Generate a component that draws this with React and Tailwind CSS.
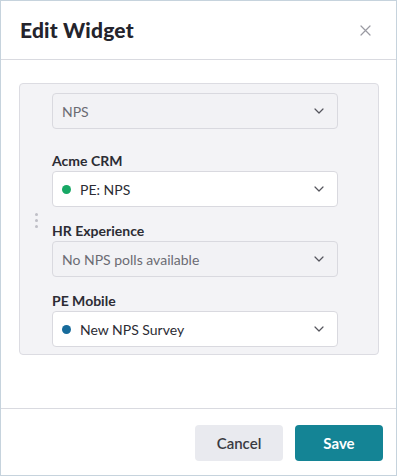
import React from 'react';

const Chevron = () => (
  <svg width="10" height="6" viewBox="0 0 10 6" fill="none" className="shrink-0">
    <path d="M1 1l4 4 4-4" stroke="#55555d" strokeWidth="1.2" strokeLinecap="round" strokeLinejoin="round" />
  </svg>
);

const SelectBox = ({ value, dot, disabled }) => (
  <div
    className={`flex h-9 w-full items-center justify-between rounded border border-[#d9d9df] pl-[9px] pr-[13px] text-[14px] ${
      disabled ? 'bg-[#f2f2f5] text-[#6b6b73]' : 'bg-white text-[#2c2c34]'
    }`}
  >
    <div className="flex items-center gap-[9px]">
      {dot && <span className={`h-[9px] w-[9px] rounded-full ${dot}`} />}
      <span>{value}</span>
    </div>
    <Chevron />
  </div>
);

const Field = ({ label, children }) => (
  <div className="flex flex-col">
    <label className="h-5 text-[14px] font-bold leading-5 text-[#2c2c34]">{label}</label>
    {children}
  </div>
);

export default function App() {
  return (
    <div
      className="flex h-[476px] w-[397px] flex-col border border-[#c6d3dd] bg-white"
      style={{ fontFamily: 'Lato, "Noto Sans", sans-serif' }}
    >
      {/* Header */}
      <div className="flex h-[59px] shrink-0 items-center justify-between border-b border-[#d9dae0] pl-[19px] pr-[25px]">
        <h1 className="text-[21px] font-black tracking-[0.2px] text-[#24242c]">Edit Widget</h1>
        <button className="text-[#9a9aa2]" aria-label="Close">
          <svg width="11" height="11" viewBox="0 0 11 11" fill="none">
            <path d="M1 1l9 9M10 1l-9 9" stroke="currentColor" strokeWidth="1.2" strokeLinecap="round" />
          </svg>
        </button>
      </div>

      {/* Body */}
      <div className="flex-1 pl-[18px] pt-[23px]">
        <div className="flex w-[360px] rounded border border-[#dcdce2] bg-[#f3f3f6] pb-[7px] pt-[9px]">
          <div className="flex w-[32px] shrink-0 items-center justify-center pl-[1px]">
            <div className="flex flex-col gap-[3px]">
              <span className="h-[3px] w-[3px] rounded-full bg-[#bfbfc6]" />
              <span className="h-[3px] w-[3px] rounded-full bg-[#bfbfc6]" />
              <span className="h-[3px] w-[3px] rounded-full bg-[#bfbfc6]" />
            </div>
          </div>
          <div className="flex w-[286px] flex-col gap-[14px]">
            <div className="mb-2">
              <SelectBox value="NPS" disabled />
            </div>
            <Field label="Acme CRM">
              <SelectBox value="PE: NPS" dot="bg-[#17a865]" />
            </Field>
            <Field label="HR Experience">
              <SelectBox value="No NPS polls available" disabled />
            </Field>
            <Field label="PE Mobile">
              <SelectBox value="New NPS Survey" dot="bg-[#176b9b]" />
            </Field>
          </div>
        </div>
      </div>

      {/* Footer */}
      <div className="flex h-[67px] shrink-0 items-start justify-end gap-3 border-t border-[#d9dae0] pr-[13px] pt-4">
        <button className="h-9 w-[88px] rounded bg-[#e9eaef] text-[15px] font-semibold text-[#3a3a42]">
          Cancel
        </button>
        <button className="h-9 w-[88px] rounded bg-[#148495] text-[15px] font-bold text-white">
          Save
        </button>
      </div>
    </div>
  );
}
